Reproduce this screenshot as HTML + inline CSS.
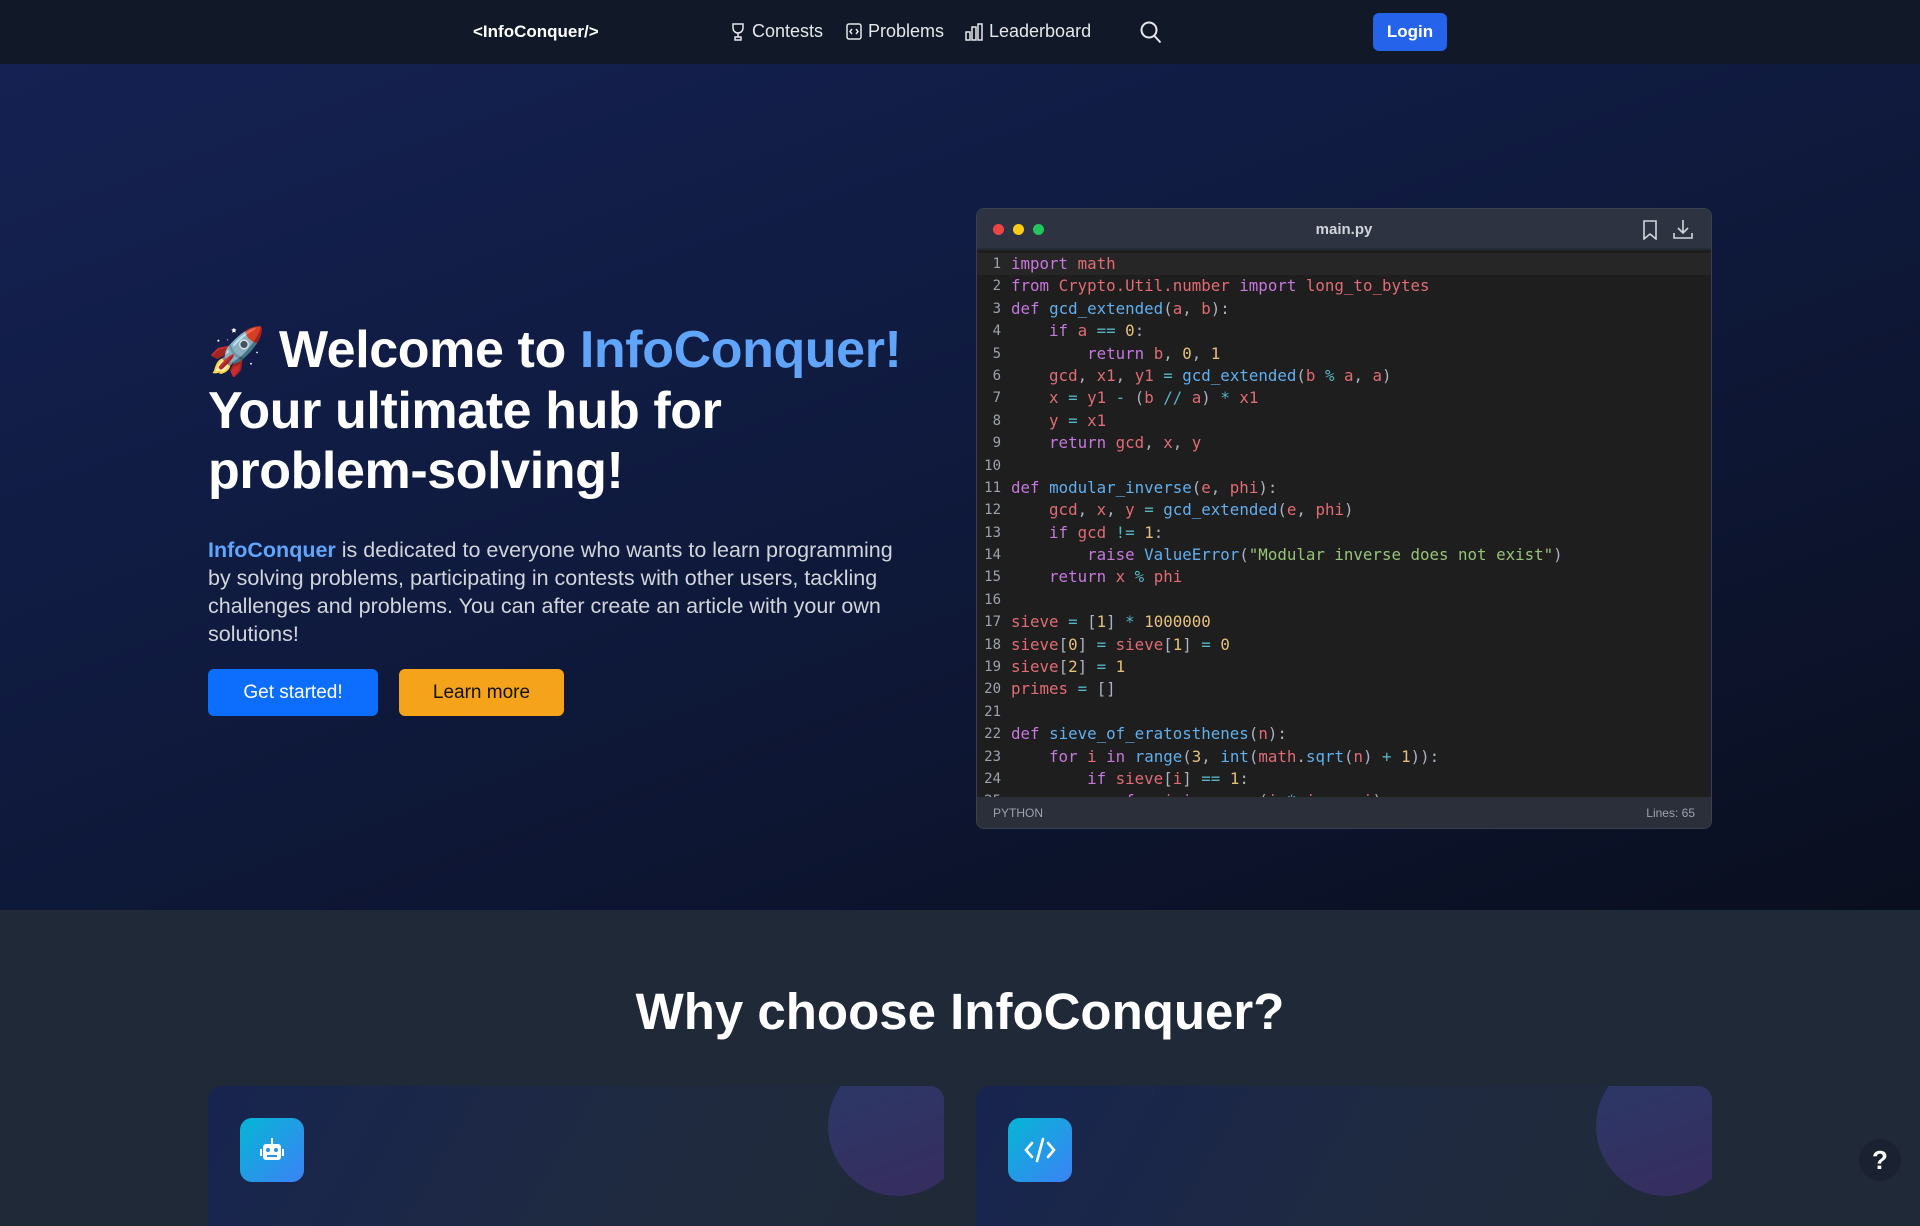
<!DOCTYPE html>
<html><head><meta charset="utf-8">
<style>
*{box-sizing:border-box;margin:0;padding:0}
body{width:1920px;height:1216px;overflow:hidden;font-family:"Liberation Sans",sans-serif;background:#1f2937;color:#fff;position:relative}
.nav{position:absolute;left:0;top:0;width:1920px;height:64px;background:#111827}
.nav .logo{position:absolute;left:473px;top:22px;font-weight:bold;font-size:17px}
.nav .item{position:absolute;top:21px;font-size:18px;color:#e5e7eb;display:flex;align-items:center;gap:6px}
.login{position:absolute;left:1373px;top:13px;width:74px;height:38px;background:#2563eb;border-radius:6px;font-weight:bold;font-size:17px;display:flex;align-items:center;justify-content:center}
.hero{position:absolute;left:0;top:64px;width:1920px;height:846px;background:linear-gradient(160deg,#152152 0%,#0f1a3e 45%,#0a0f1f 100%)}
h1{position:absolute;left:208px;top:320px;font-size:52px;line-height:60px;font-weight:bold;letter-spacing:-0.4px}
h1 .b{color:#60a5fa}
.para{position:absolute;left:208px;top:536px;width:705px;font-size:21.5px;line-height:28px;color:#d1d5db}
.para b{color:#60a5fa}
.btn{position:absolute;top:669px;height:47px;border-radius:6px;font-size:19px;display:flex;align-items:center;justify-content:center}
.code{position:absolute;left:976px;top:208px;width:736px;height:621px;background:#1e1e1e;border-radius:8px;overflow:hidden;border:1px solid #374151}
.ch{height:41px;background:#2d3340;position:relative;border-bottom:2px solid #242a36}
.dot{position:absolute;top:15px;width:11px;height:11px;border-radius:50%}
.ch .t{position:absolute;left:0;right:0;top:12px;text-align:center;font-size:15px;font-weight:bold;color:#d1d5db}
.lines{position:absolute;top:44px;left:0;right:0;bottom:31px;overflow:hidden;font-family:"DejaVu Sans Mono","Liberation Mono",monospace;font-size:15.8px;line-height:22.4px;color:#abb2bf}
.ln{display:block;white-space:pre;height:22.4px;overflow:hidden}
.ln i{display:inline-block;vertical-align:top;line-height:22.4px;font-style:normal;width:24px;text-align:right;color:#9ca3af;font-size:14px;margin-right:10px}
.ln.hl{background:#262626}
.k{color:#c678dd}.v{color:#e06c75}.f{color:#61afef}.n{color:#e5c07b}.s{color:#98c379}.o{color:#56b6c2}
.cf{position:absolute;left:0;right:0;bottom:0;height:31px;background:#2a2f3a;font-size:12px;color:#9ca3af;display:flex;justify-content:space-between;align-items:center;padding:0 16px}
h2{position:absolute;left:0;width:1920px;top:982px;text-align:center;font-size:51px;font-weight:bold}
.card{position:absolute;top:1086px;width:736px;height:140px;border-radius:14px 14px 0 0;background:linear-gradient(120deg,#17244f,#1f2a40 60%,#1f2937);overflow:hidden}
.card .c{position:absolute;left:620px;top:-30px;width:140px;height:140px;border-radius:50%;background:linear-gradient(160deg,#2a3a68,#372c5e)}
.card .ic{position:absolute;left:32px;top:32px;width:64px;height:64px;border-radius:12px;background:linear-gradient(135deg,#06b6d4,#3b82f6);display:flex;align-items:center;justify-content:center}
.help{position:absolute;left:1859px;top:1139px;width:42px;height:42px;border-radius:50%;background:#1a2130;font-size:26px;font-weight:bold;display:flex;align-items:center;justify-content:center}
</style></head><body>
<div class="nav">
<div class="logo">&lt;InfoConquer/&gt;</div>
<div class="item" style="left:730px"><svg width="16" height="20" viewBox="0 0 16 20" fill="none" stroke="#e5e7eb" stroke-width="1.5"><path d="M3 2h10v4a5 5 0 0 1-10 0z M8 11v4 M5 15h6v3H5z"/></svg>Contests</div>
<div class="item" style="left:846px"><svg width="16" height="18" viewBox="0 0 16 18" fill="none" stroke="#e5e7eb" stroke-width="1.5"><rect x="1" y="1" width="14" height="15" rx="2"/><path d="M6 6l-2 2.5 2 2.5M10 6l2 2.5-2 2.5"/></svg>Problems</div>
<div class="item" style="left:965px"><svg width="18" height="18" viewBox="0 0 18 18" fill="none" stroke="#e5e7eb" stroke-width="1.5"><rect x="1" y="9" width="4" height="8"/><rect x="7" y="4" width="4" height="13"/><rect x="13" y="1" width="4" height="16"/></svg>Leaderboard</div>
<svg style="position:absolute;left:1140px;top:21px" width="22" height="23" viewBox="0 0 22 23" fill="none" stroke="#e5e7eb" stroke-width="2"><circle cx="9" cy="9" r="7.5"/><path d="M14.5 15l6 6.5"/></svg>
<div class="login">Login</div>
</div>
<div class="hero"></div>
<h1><span style="font-size:46px">🚀</span> Welcome to <span class="b">InfoConquer!</span><br>Your ultimate hub for<br>problem-solving!</h1>
<div class="para"><b>InfoConquer</b> is dedicated to everyone who wants to learn programming by solving problems, participating in contests with other users, tackling challenges and problems. You can after create an article with your own solutions!</div>
<div class="btn" style="left:208px;width:170px;background:#0d6efd">Get started!</div>
<div class="btn" style="left:399px;width:165px;background:#f5a31a;color:#111">Learn more</div>
<div class="code">
<div class="ch"><div class="dot" style="left:16px;background:#ef4444"></div><div class="dot" style="left:36px;background:#facc15"></div><div class="dot" style="left:56px;background:#22c55e"></div><div class="t">main.py</div>
<svg style="position:absolute;right:52px;top:11px" width="18" height="20" viewBox="0 0 18 20" fill="none" stroke="#d1d5db" stroke-width="1.6"><path d="M3 1h12v18l-6-5-6 5z"/></svg>
<svg style="position:absolute;right:18px;top:10px" width="20" height="21" viewBox="0 0 20 21" fill="none" stroke="#d1d5db" stroke-width="1.6"><path d="M10 1v13M5 9l5 5 5-5M1 14v5h18v-5"/></svg></div>
<div class="lines">
<div class="ln hl"><i>1</i><span class="k">import</span> <span class="v">math</span></div>
<div class="ln"><i>2</i><span class="k">from</span> <span class="v">Crypto.Util.number</span> <span class="k">import</span> <span class="v">long_to_bytes</span></div>
<div class="ln"><i>3</i><span class="k">def</span> <span class="f">gcd_extended</span>(<span class="v">a</span>, <span class="v">b</span>):</div>
<div class="ln"><i>4</i>    <span class="k">if</span> <span class="v">a</span> <span class="o">==</span> <span class="n">0</span>:</div>
<div class="ln"><i>5</i>        <span class="k">return</span> <span class="v">b</span>, <span class="n">0</span>, <span class="n">1</span></div>
<div class="ln"><i>6</i>    <span class="v">gcd</span>, <span class="v">x1</span>, <span class="v">y1</span> <span class="o">=</span> <span class="f">gcd_extended</span>(<span class="v">b</span> <span class="o">%</span> <span class="v">a</span>, <span class="v">a</span>)</div>
<div class="ln"><i>7</i>    <span class="v">x</span> <span class="o">=</span> <span class="v">y1</span> <span class="o">-</span> (<span class="v">b</span> <span class="o">//</span> <span class="v">a</span>) <span class="o">*</span> <span class="v">x1</span></div>
<div class="ln"><i>8</i>    <span class="v">y</span> <span class="o">=</span> <span class="v">x1</span></div>
<div class="ln"><i>9</i>    <span class="k">return</span> <span class="v">gcd</span>, <span class="v">x</span>, <span class="v">y</span></div>
<div class="ln"><i>10</i></div>
<div class="ln"><i>11</i><span class="k">def</span> <span class="f">modular_inverse</span>(<span class="v">e</span>, <span class="v">phi</span>):</div>
<div class="ln"><i>12</i>    <span class="v">gcd</span>, <span class="v">x</span>, <span class="v">y</span> <span class="o">=</span> <span class="f">gcd_extended</span>(<span class="v">e</span>, <span class="v">phi</span>)</div>
<div class="ln"><i>13</i>    <span class="k">if</span> <span class="v">gcd</span> <span class="o">!=</span> <span class="n">1</span>:</div>
<div class="ln"><i>14</i>        <span class="k">raise</span> <span class="f">ValueError</span>(<span class="s">"Modular inverse does not exist"</span>)</div>
<div class="ln"><i>15</i>    <span class="k">return</span> <span class="v">x</span> <span class="o">%</span> <span class="v">phi</span></div>
<div class="ln"><i>16</i></div>
<div class="ln"><i>17</i><span class="v">sieve</span> <span class="o">=</span> [<span class="n">1</span>] <span class="o">*</span> <span class="n">1000000</span></div>
<div class="ln"><i>18</i><span class="v">sieve</span>[<span class="n">0</span>] <span class="o">=</span> <span class="v">sieve</span>[<span class="n">1</span>] <span class="o">=</span> <span class="n">0</span></div>
<div class="ln"><i>19</i><span class="v">sieve</span>[<span class="n">2</span>] <span class="o">=</span> <span class="n">1</span></div>
<div class="ln"><i>20</i><span class="v">primes</span> <span class="o">=</span> []</div>
<div class="ln"><i>21</i></div>
<div class="ln"><i>22</i><span class="k">def</span> <span class="f">sieve_of_eratosthenes</span>(<span class="v">n</span>):</div>
<div class="ln"><i>23</i>    <span class="k">for</span> <span class="v">i</span> <span class="k">in</span> <span class="f">range</span>(<span class="n">3</span>, <span class="f">int</span>(<span class="v">math</span>.<span class="f">sqrt</span>(<span class="v">n</span>) <span class="o">+</span> <span class="n">1</span>)):</div>
<div class="ln"><i>24</i>        <span class="k">if</span> <span class="v">sieve</span>[<span class="v">i</span>] <span class="o">==</span> <span class="n">1</span>:</div>
<div class="ln"><i>25</i>            <span class="k">for</span> <span class="v">j</span> <span class="k">in</span> <span class="f">range</span>(<span class="v">i</span> <span class="o">*</span> <span class="v">i</span>, <span class="v">n</span>, <span class="v">i</span>):</div>
</div>
<div class="cf"><span>PYTHON</span><span>Lines: 65</span></div>
</div>
<h2>Why choose InfoConquer?</h2>
<div class="card" style="left:208px"><div class="c"></div><div class="ic"><svg width="30" height="30" viewBox="0 0 30 30" fill="#fff"><rect x="6" y="9" width="18" height="16" rx="3"/><rect x="14" y="3" width="2" height="6"/><rect x="3" y="14" width="2" height="7"/><rect x="25" y="14" width="2" height="7"/><circle cx="11" cy="15" r="2" fill="#2b8fe6"/><circle cx="19" cy="15" r="2" fill="#2b8fe6"/><rect x="10" y="20" width="10" height="2" fill="#2b8fe6"/></svg></div></div>
<div class="card" style="left:976px"><div class="c"></div><div class="ic"><svg width="34" height="30" viewBox="0 0 34 30" fill="none" stroke="#fff" stroke-width="2.6" stroke-linecap="round"><path d="M9 8l-6 7 6 7M25 8l6 7-6 7M20 4l-6 22"/></svg></div></div>
<div class="help">?</div>
</body></html>
